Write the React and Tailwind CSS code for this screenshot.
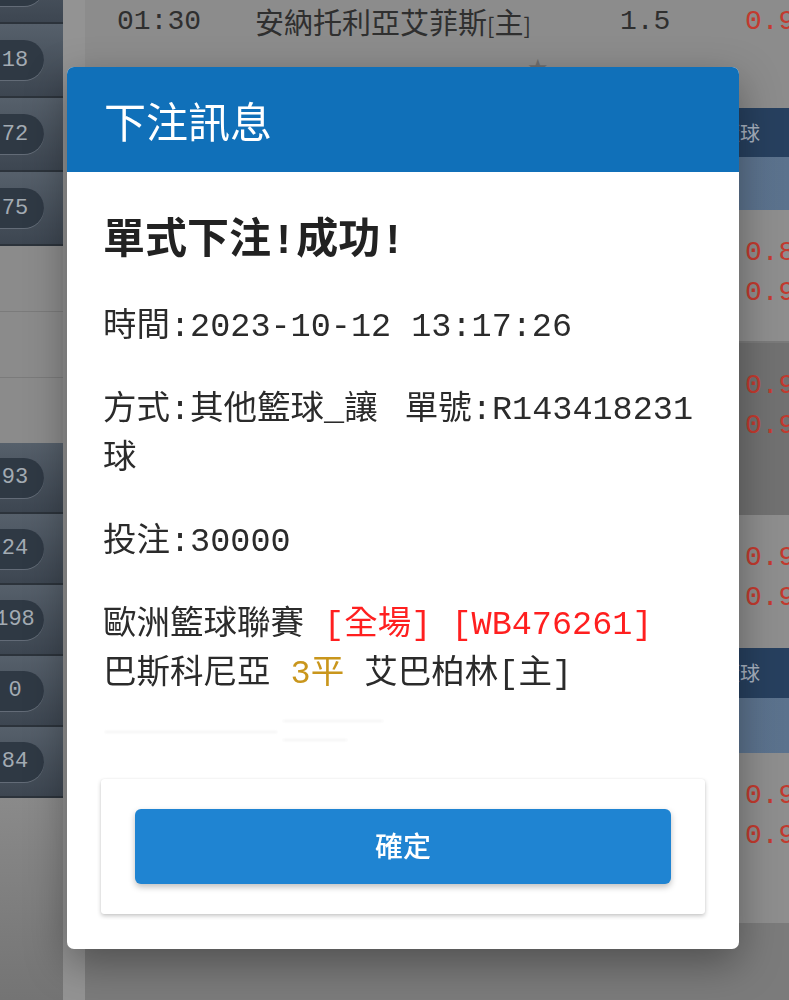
import React from 'react';

const monoFont = "font-['Liberation_Mono','Noto_Sans_CJK_TC',monospace]";
const cjkFont = "font-['Noto_Sans_CJK_TC','Noto_Sans',sans-serif]";

const topBadges = ['06', '18', '72', '75'];
const lowerBadges = ['93', '24', '198', '0', '84'];

const Badge = ({ value }) => (
  <div className="-ml-[18px] flex h-[40px] w-[62px] items-center justify-center rounded-full bg-[#2f3944] shadow-[0_1px_0_rgba(160,170,180,0.35)]">
    <span className={`${monoFont} pl-[4px] text-[22px] text-[#a3abb3]`}>{value}</span>
  </div>
);

const Sidebar = () => (
  <aside className="flex w-[63px] shrink-0 flex-col bg-[#8a8a8a] shadow-[2px_0_3px_rgba(0,0,0,0.15)]">
    <div className="-mt-[50px] flex flex-col">
      {topBadges.map((badge) => (
        <div
          key={badge}
          className="flex h-[74px] items-center border-b-2 border-[#2c333b] bg-linear-to-b from-[#56606b] to-[#3d4651]"
        >
          <Badge value={badge} />
        </div>
      ))}
    </div>
    <div className="h-[66px] border-b border-[#7b7b7b] bg-[#8b8b8b]" />
    <div className="h-[66px] border-b border-[#7b7b7b] bg-[#8b8b8b]" />
    <div className="h-[65px] bg-[#8b8b8b]" />
    {lowerBadges.map((badge) => (
      <div
        key={badge}
        className="flex h-[71px] items-center border-b-2 border-[#2c333b] bg-linear-to-b from-[#56606b] to-[#3d4651]"
      >
        <Badge value={badge} />
      </div>
    ))}
    <div className="flex-1 bg-linear-to-b from-[#8a8a8a] to-[#747474]" />
  </aside>
);

const OddsRow = ({ height, tone, odds }) => (
  <div className={`grid grid-cols-[170px_365px_125px_1fr] ${height} ${tone}`}>
    <div />
    <div />
    <div />
    <div className={`${monoFont} whitespace-nowrap pt-[23px] text-[28px] leading-[40px] text-[#c23a2f]`}>
      {odds.map((o, i) => (
        <div key={i}>{o}</div>
      ))}
    </div>
  </div>
);

const LeagueHeader = ({ height }) => (
  <div className={`flex items-center justify-end pr-[29px] ${height} bg-[#27405f]`}>
    <span className={`${cjkFont} text-[20px] text-[#a9b3c1]`}>歐洲籃球</span>
  </div>
);

const BackgroundPage = () => (
  <div className="flex h-[1000px] bg-[#8c8c8c]">
    <Sidebar />
    <div className="w-[22px] shrink-0 bg-[#939393]" />
    <main className="flex min-w-0 flex-1 flex-col">
      <div className="h-[108px] bg-[#8c8c8c]">
        <div className="grid h-[34px] grid-cols-[170px_365px_125px_1fr] items-center whitespace-nowrap">
          <span className={`${monoFont} pl-[32px] text-[28px] text-[#2f2f2f]`}>01:30</span>
          <span className={`${cjkFont} text-[29px] text-[#2f2f2f]`}>
            安納托利亞艾菲斯<span className="text-[22px]">[</span>主<span className="text-[22px]">]</span>
          </span>
          <span className={`${monoFont} text-[28px] text-[#2f2f2f]`}>1.5</span>
          <span className={`${monoFont} text-[28px] text-[#c23a2f]`}>0.9</span>
        </div>
        <div className="grid grid-cols-[170px_365px_125px_1fr] pt-[18px]">
          <div />
          <span className="pl-[272px] text-[24px] leading-[30px] text-[#6e6e6e]">★</span>
        </div>
      </div>
      <LeagueHeader height="h-[49px]" />
      <div className="h-[53px] bg-linear-to-r from-[#6d839c] to-[#5b728d]" />
      <OddsRow height="h-[133px]" tone="bg-[#8e8e8e] border-b-2 border-[#7a7a7a]" odds={['0.8', '0.9']} />
      <OddsRow height="h-[172px]" tone="bg-[#717171]" odds={['0.9', '0.9']} />
      <OddsRow height="h-[133px]" tone="bg-[#8e8e8e]" odds={['0.9', '0.9']} />
      <LeagueHeader height="h-[50px]" />
      <div className="h-[55px] bg-linear-to-r from-[#6d839c] to-[#5b728d]" />
      <OddsRow height="h-[170px]" tone="bg-[#8e8e8e]" odds={['0.9', '0.9']} />
      <div className="flex-1 bg-[#7b7b7b]" />
    </main>
  </div>
);

const BetModal = () => (
  <div className="ml-[67px] mt-[67px] w-[672px] overflow-hidden rounded-[7px] bg-white shadow-[0_14px_40px_rgba(0,0,0,0.35)]">
    <div className="flex h-[105px] items-center bg-[#1070b9] px-[37px]">
      <h2 className={`${cjkFont} text-[42px] font-normal leading-none text-white`}>下注訊息</h2>
    </div>
    <div className="px-[34px] pb-[35px] pt-[45px] text-[#2b2b2b]">
      <div className={`${monoFont} pl-[2px] pr-[12px] text-[33.5px]`}>
        <h3 className="mb-[36px] text-[42px] font-bold leading-[50px] text-[#222]">單式下注!成功!</h3>
        <p className="mb-[34px] leading-[49px]">時間:2023-10-12 13:17:26</p>
        <p className="mb-[34px] leading-[49px]">
          <span className="float-right">單號:R143418231</span>
          方式:其他籃球_讓球
        </p>
        <p className="mb-[34px] leading-[49px]">投注:30000</p>
        <p className="leading-[49px]">
          歐洲籃球聯賽 <span className="text-[#ff1f1f]">[全場]</span>{' '}
          <span className="text-[#ff1f1f]">[WB476261]</span>
          <br />
          巴斯科尼亞 <span className="text-[#c9961c]">3平</span> 艾巴柏林[主]
        </p>
      </div>
      <div className="flex h-[49px] items-start gap-[6px] pl-[4px] blur-[1px]">
        <div className="mt-[32px] h-[2px] w-[172px] bg-[#f3f3f3]" />
        <div className="flex flex-col">
          <div className="mt-[21px] h-[2px] w-[100px] bg-[#f4f4f4]" />
          <div className="mt-[17px] h-[2px] w-[64px] bg-[#f4f4f4]" />
        </div>
      </div>
      <div className="mt-[31px] rounded-[3px] bg-white px-[34px] py-[30px] shadow-[0_2px_4px_rgba(0,0,0,0.22),0_0_1px_rgba(0,0,0,0.12)]">
        <button
          type="button"
          className={`${cjkFont} flex h-[75px] w-full items-center justify-center rounded-[6px] bg-[#1f84d2] pb-[4px] text-[28px] font-medium text-white shadow-[0_3px_6px_rgba(0,0,0,0.25)]`}
        >
          確定
        </button>
      </div>
    </div>
  </div>
);

export default function App() {
  return (
    <div className="relative h-[1000px] overflow-hidden">
      <BackgroundPage />
      <div className="fixed inset-0">
        <BetModal />
      </div>
    </div>
  );
}
